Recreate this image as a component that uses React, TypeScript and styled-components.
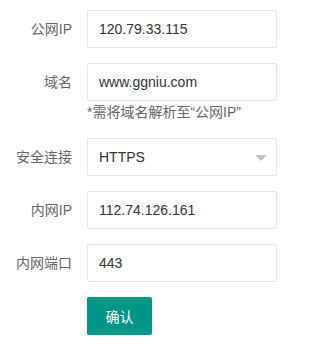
import styled, { createGlobalStyle } from "styled-components";

const Global = createGlobalStyle`
  body {
    margin: 0;
    background: #fff;
    font-family: "Liberation Sans", "Noto Sans CJK SC", sans-serif;
  }
`;

const Form = styled.div`
  padding: 10px 0 0 0;
  display: flex;
  flex-direction: column;
`;

const Row = styled.div<{ $last?: boolean }>`
  display: flex;
  align-items: flex-start;
  margin-bottom: ${(p) => (p.$last ? 0 : 15)}px;
`;

const Label = styled.label`
  width: 72px;
  flex: none;
  text-align: right;
  padding-right: 15px;
  line-height: 38px;
  font-size: 14px;
  color: #666;
`;

const Field = styled.div`
  width: 190px;
  display: flex;
  flex-direction: column;
`;

const Input = styled.div`
  box-sizing: border-box;
  height: 38px;
  border: 1px solid #e6e6e6;
  border-radius: 2px;
  padding: 0 11px;
  line-height: 36px;
  font-size: 14px;
  color: #333;
  position: relative;
`;

const Arrow = styled.span`
  position: absolute;
  right: 9px;
  top: 16px;
  width: 0;
  height: 0;
  border-left: 6px solid transparent;
  border-right: 6px solid transparent;
  border-top: 6px solid #c2c2c2;
`;

const Hint = styled.div`
  line-height: 22px;
  font-size: 14px;
  color: #666;
  white-space: nowrap;
`;

const Button = styled.button`
  margin-left: 87px;
  width: 65px;
  height: 38px;
  border: none;
  border-radius: 2px;
  background: #009688;
  color: #fff;
  font-size: 14px;
  font-family: inherit;
`;

export default function App() {
  return (
    <>
      <Global />
      <Form>
        <Row>
          <Label>公网IP</Label>
          <Field>
            <Input>120.79.33.115</Input>
          </Field>
        </Row>
        <Row>
          <Label>域名</Label>
          <Field>
            <Input>www.ggniu.com</Input>
            <Hint>*需将域名解析至“公网IP”</Hint>
          </Field>
        </Row>
        <Row>
          <Label>安全连接</Label>
          <Field>
            <Input>
              HTTPS
              <Arrow />
            </Input>
          </Field>
        </Row>
        <Row>
          <Label>内网IP</Label>
          <Field>
            <Input>112.74.126.161</Input>
          </Field>
        </Row>
        <Row>
          <Label>内网端口</Label>
          <Field>
            <Input>443</Input>
          </Field>
        </Row>
        <Button>确认</Button>
      </Form>
    </>
  );
}
